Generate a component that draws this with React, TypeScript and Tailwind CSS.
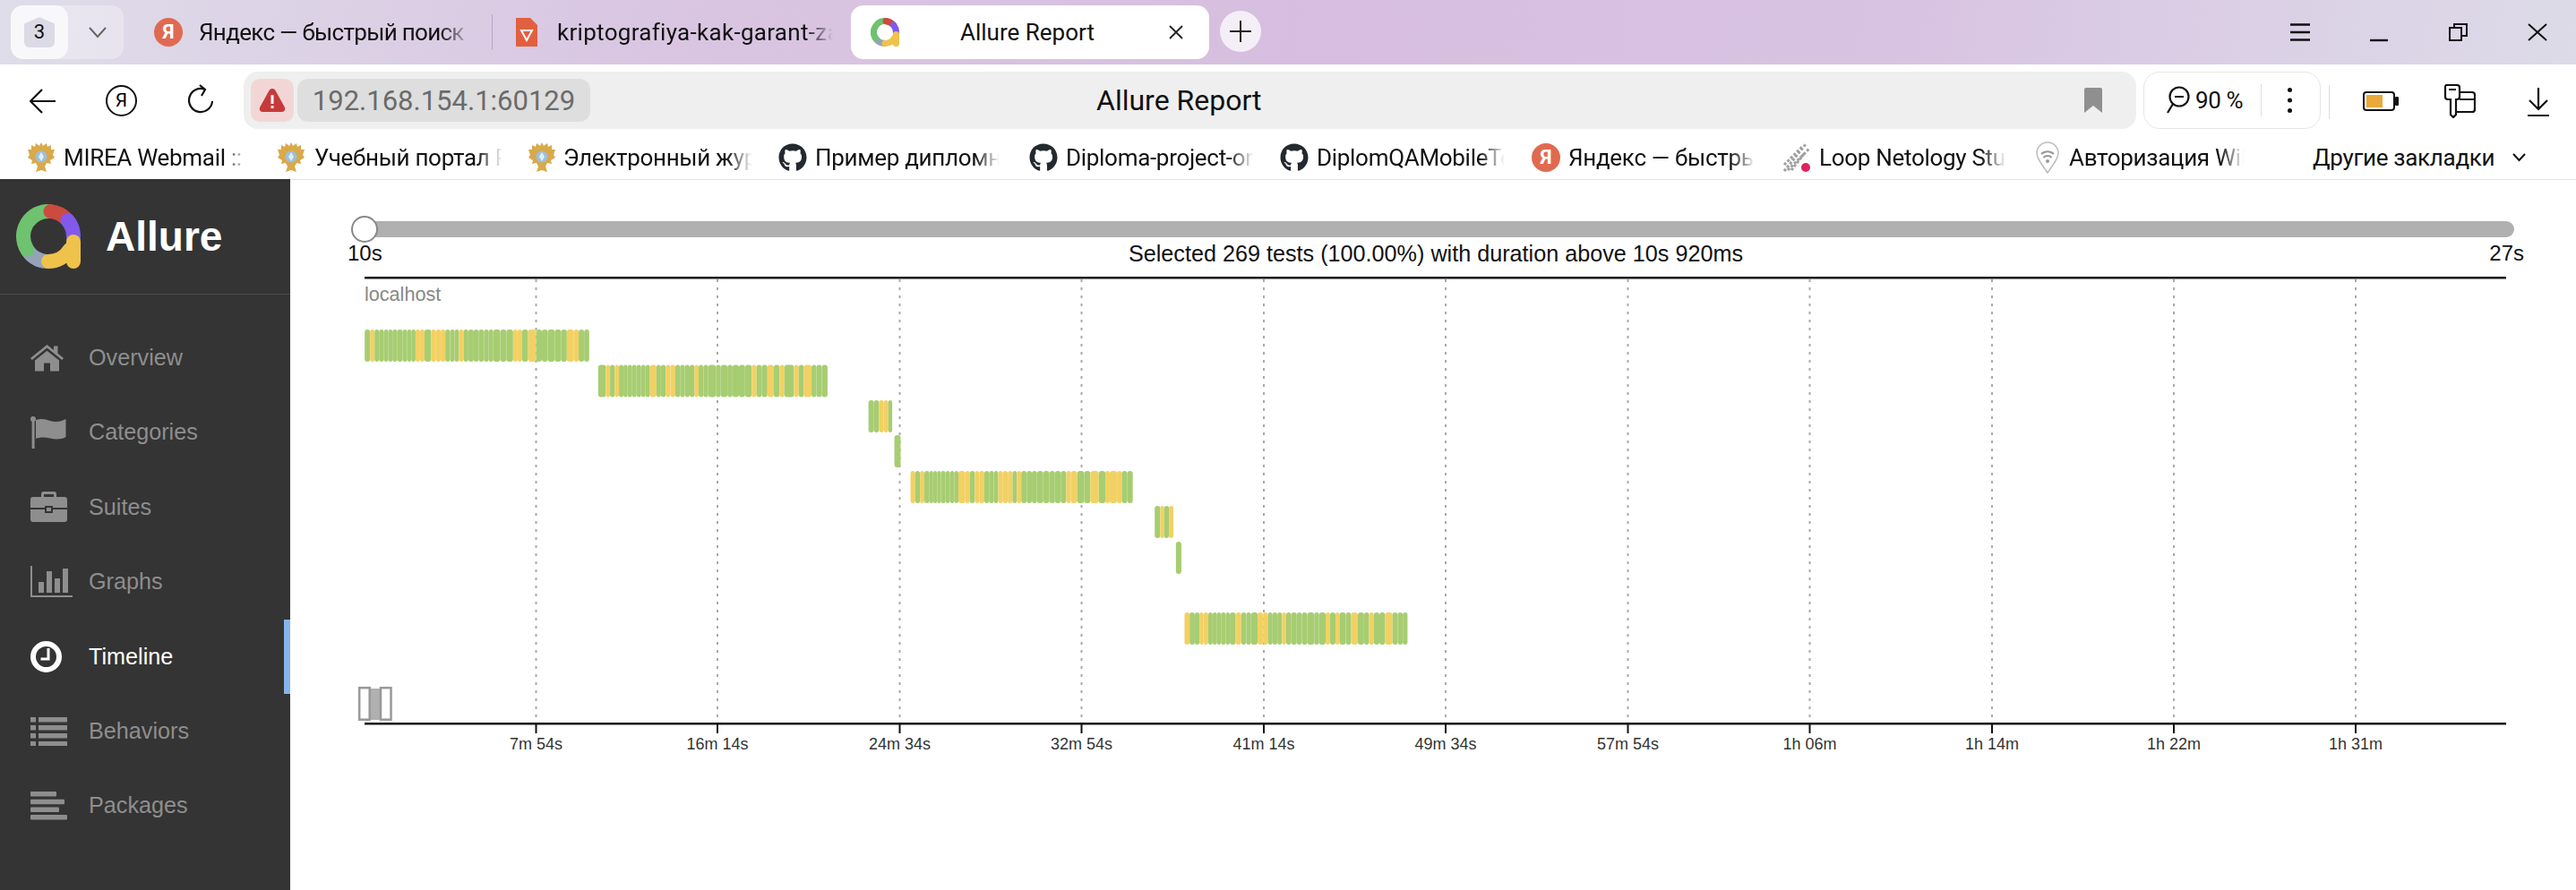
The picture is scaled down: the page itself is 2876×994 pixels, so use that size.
import React from "react";
import { FaGithub } from "react-icons/fa";

const G = "#a7cd72";
const Y = "#f2d164";
type Row = { y: number; sx: number; ox: number; start: number; segs: string };
const rows: Row[] = [
  { y: 368, ox: 380, sx: 2.8, start: 76, segs: "g93 y107 g121 g136 g150 g163 g178 g195 g209 g222 g235 y249 y263 g284 y299 y314 y328 g343 g357 g371 y385 g400 g417 g432 g449 g464 g478 g500 g519 g540 y554 y568 g587 y612 g630 g648 g670 g690 g708 y730 y745 g762 g778" },
  { y: 407.5, ox: 380, sx: 2.8, start: 806, segs: "g830 y843 g858 y871 g885 g898 g912 g926 g940 g954 g968 y988 g1002 g1017 y1032 y1047 g1062 g1077 g1092 g1107 y1120 g1135 g1150 g1174 g1189 g1210 g1226 g1246 g1265 g1286 y1301 g1317 g1335 y1355 g1373 y1388 g1418 y1433 g1449 y1473 g1488 g1505 g1523" },
  { y: 447, ox: 930, sx: 2.45, start: 97, segs: "g112 g126 y139 y151 g162" },
  { y: 486, ox: 930, sx: 2.45, start: 168, segs: "g185" },
  { y: 526, ox: 930, sx: 2.45, start: 212, segs: "y225 g238 y250 g264 g274 g285 g295 g308 g320 g332 g343 y362 y374 g388 y400 y414 g427 g440 g452 y465 y478 y491 g503 y515 g530 g544 g558 g575 g592 g607 g623 g638 y651 y668 g687 g704 y727 g745 y757 y777 y790 g805 g820" },
  { y: 565, ox: 930, sx: 2.45, start: 880, segs: "g895 y906 g919 y931" },
  { y: 605, ox: 930, sx: 2.45, start: 938, segs: "g953" },
  { y: 684, ox: 1260, sx: 2.45, start: 153, segs: "y167 g181 g194 y205 y218 g230 g242 g253 g266 g277 g293 y308 g322 g335 g353 y368 y381 g394 g407 g420 y431 g445 g460 g474 g489 g508 g521 g539 y551 g566 y577 g594 g609 y627 g644 g658 y671 g686 g702 y722 g736 g750 g763" },
];
const ticks: [number, string][] = [
  [598.5, "7m 54s"], [801, "16m 14s"], [1004.5, "24m 34s"], [1207.5, "32m 54s"], [1411, "41m 14s"], [1614, "49m 34s"],
  [1817.5, "57m 54s"], [2020.5, "1h 06m"], [2224, "1h 14m"], [2427, "1h 22m"], [2630, "1h 31m"],
];
const OX = 324;
const OY = 301;

function AllureLogo({ size }: { size: number }) {
  const p = (t: number) => {
    const a = (t * Math.PI) / 180;
    return `${(36 + 28 * Math.sin(a)).toFixed(2)} ${(36 - 28 * Math.cos(a)).toFixed(2)}`;
  };
  return (
    <svg width={size} height={size} viewBox="0 0 72 72" fill="none" strokeWidth={16} strokeLinecap="round" className="shrink-0">
      <path d={`M${p(235)} A28 28 0 0 0 ${p(185)}`} stroke="#94a3b8" />
      <path d={`M${p(180)} A28 28 0 0 0 ${p(122)}`} stroke="#efc24c" />
      <path d={`M${p(238)} A28 28 0 0 1 ${p(5)}`} stroke="#6fc26f" />
      <path d={`M${p(5)} A28 28 0 0 1 ${p(48)}`} stroke="#cc4a3f" />
      <path d={`M${p(50)} A28 28 0 0 1 ${p(92)}`} stroke="#8259ea" />
      <path d="M64 42 V64" stroke="#efc24c" />
    </svg>
  );
}

function YandexIcon() {
  return (
    <span className="flex h-[32px] w-[32px] shrink-0 items-center justify-center rounded-full bg-[#e06a50] text-[22px] font-bold leading-none text-white">Я</span>
  );
}

function Eagle() {
  return (
    <svg width="32" height="36" viewBox="0 0 32 36" className="shrink-0">
      <path d="M16 1l2 4 4-3 1 4 4-2 0 5 4 0-2 6 2 3-5 3 1 4-5-1-2 4 2 6-6-2-6 2 2-6-2-4-5 1 1-4-5-3 2-3-2-6 4 0 0-5 4 2 1-4 4 3z" fill="#d9a94a" />
      <circle cx="16" cy="17" r="6.5" fill="#9cc0dc" />
      <path d="M16 12l3 5-3 5-3-5z" fill="#e6eef5" />
    </svg>
  );
}

function Bookmark({ icon, text, w, gap = 9, ml }: { icon: React.ReactNode; text: string; w: number; gap?: number; ml: number }) {
  return (
    <div className="flex shrink-0 items-center" style={{ marginLeft: ml }}>
      {icon}
      <span
        className="overflow-hidden whitespace-nowrap text-[26px] leading-[34px] tracking-[-0.3px] text-[#111] [mask-image:linear-gradient(to_right,black_85%,transparent_98%)]"
        style={{ width: w, marginLeft: gap }}
      >
        {text}
      </span>
    </div>
  );
}

function NavItem({ icon, label, active }: { icon: React.ReactNode; label: string; active?: boolean }) {
  return (
    <div className={`relative flex h-[83.4px] items-center pl-[34px] ${active ? "text-white" : "text-[#8e8e8e]"}`}>
      <span className="flex w-[65px] shrink-0 items-center">{icon}</span>
      <span className="text-[25.2px] leading-none">{label}</span>
      {active && <span className="absolute right-0 top-0 h-full w-[7px] bg-[#86b4ec]" />}
    </div>
  );
}

const Home = () => (
  <svg width="37" height="30" viewBox="0 0 37 30" fill="currentColor">
    <path d="M18.5 0 L26 6 V1.5 H30.5 V9.8 L37 15 L35.2 17 L18.5 3.6 L1.8 17 L0 15 Z" />
    <path d="M5 17.5 L18.5 6.8 L32 17.5 V29.5 H22 V20.5 H15 V29.5 H5 Z" />
  </svg>
);
const Flag = () => (
  <svg width="40" height="36" viewBox="0 0 40 36" fill="currentColor">
    <circle cx="3" cy="3" r="3" />
    <rect x="1.6" y="3" width="3" height="33" />
    <path d="M6 4 C12 2 16 3 22 5 C28 7 34 6 39.5 3 V23 C34 26 28 26 22 24.5 C16 23 11 23 6 25 Z" />
  </svg>
);
const Brief = () => (
  <svg width="41" height="34" viewBox="0 0 41 34" fill="currentColor">
    <path d="M12 6 V2.5 A2.5 2.5 0 0 1 14.5 0 H26.5 A2.5 2.5 0 0 1 29 2.5 V6 H26 V3 H15 V6 Z" />
    <path d="M3 6 H38 A3 3 0 0 1 41 9 V18 H25 V16 H16 V18 H0 V9 A3 3 0 0 1 3 6 Z" />
    <path d="M0 20 H16 V24 H25 V20 H41 V31 A3 3 0 0 1 38 34 H3 A3 3 0 0 1 0 31 Z" />
    <rect x="18" y="18" width="5" height="4" />
  </svg>
);
const Chart = () => (
  <svg width="47" height="35" viewBox="0 0 47 35" fill="currentColor">
    <rect x="0" y="0" width="2" height="35" />
    <rect x="0" y="33" width="47" height="2" />
    <rect x="9" y="18" width="6" height="12" />
    <rect x="18" y="6" width="6" height="24" />
    <rect x="27" y="14" width="6" height="16" />
    <rect x="36" y="3" width="6" height="27" />
  </svg>
);
const Clock = () => (
  <svg width="35" height="35" viewBox="0 0 35 35" fill="none" stroke="currentColor">
    <circle cx="17.5" cy="17.5" r="14.5" strokeWidth="6" />
    <path d="M20 8 V20 H11.5" strokeWidth="3" />
  </svg>
);
const ListI = () => (
  <svg width="41" height="32" viewBox="0 0 41 32" fill="currentColor">
    {[0, 9, 18, 27].map((y) => (
      <g key={y}>
        <rect x="0" y={y} width="6" height="5.5" />
        <rect x="9" y={y} width="32" height="5.5" />
      </g>
    ))}
  </svg>
);
const Pack = () => (
  <svg width="41" height="32" viewBox="0 0 41 32" fill="currentColor">
    <rect y="0" width="29" height="5.5" rx="1" />
    <rect y="8.7" width="38" height="5.5" rx="1" />
    <rect y="17.4" width="32" height="5.5" rx="1" />
    <rect y="26" width="41" height="5.5" rx="1" />
  </svg>
);

function Chartboard() {
  return (
    <svg width="2552" height="693" viewBox={`${OX} ${OY} 2552 693`} className="block" fontFamily="'Liberation Sans', Arial, sans-serif">
      {ticks.map(([x]) => (
        <line key={x} x1={x} x2={x} y1={312} y2={808} stroke="#aaaaaa" strokeWidth={2} strokeDasharray="3 6" />
      ))}
      <rect x={407} y={309} width={2391} height={2.5} fill="#111" />
      <text x={407} y={336} fontSize={21.6} fill="#888">localhost</text>
      {rows.map((r) => {
        let cur = r.start;
        return (
          <g key={r.y}>
            {r.segs.split(" ").map((s, i) => {
              const end = Number(s.slice(1));
              const x0 = r.ox + cur / r.sx;
              const x1 = r.ox + end / r.sx;
              cur = end;
              return <rect key={i} x={x0} y={r.y} width={x1 - x0} height={36} rx={3} fill={s[0] === "g" ? G : Y} />;
            })}
          </g>
        );
      })}
      <rect x={413} y={769} width={11} height={35} fill="#b0b0b0" />
      <rect x={401.2} y={768.2} width={11.5} height={35.5} fill="#fff" stroke="#999" strokeWidth={2.5} />
      <rect x={425} y={768.2} width={11.5} height={35.5} fill="#fff" stroke="#999" strokeWidth={2.5} />
      <rect x={407} y={807} width={2391} height={2.5} fill="#111" />
      {ticks.map(([x, t]) => (
        <g key={t}>
          <rect x={x - 1} y={808} width={2} height={11} fill="#111" />
          <text x={x} y={837} fontSize={18} fill="#333" textAnchor="middle">{t}</text>
        </g>
      ))}
    </svg>
  );
}

export default function App() {
  const ui = { fontFamily: "Roboto, 'Noto Sans', sans-serif" };
  return (
    <div className="flex h-[994px] w-[2876px] flex-col overflow-hidden bg-white" style={ui}>
      {/* tab strip */}
      <div className="flex h-[72px] shrink-0 items-center bg-[linear-gradient(100deg,#dfdde9_0%,#d9c6e2_25%,#d7bee0_50%,#d8c2e2_72%,#dddbe8_100%)] py-[6px] text-[#111]">
        <div className="ml-[12px] flex h-[60px] w-[126px] shrink-0 rounded-[14px] bg-white/30">
          <div className="flex h-full w-[64px] items-center justify-center rounded-[14px] bg-white/70">
            <div className="flex h-[34px] w-[34px] items-center justify-center rounded-b-[6px] bg-[#dcdae6] text-[22px] leading-none [clip-path:polygon(50%_0,100%_22%,100%_100%,0_100%,0_22%)]">3</div>
          </div>
          <svg width="24" height="24" viewBox="0 0 24 24" fill="none" stroke="#666" strokeWidth="2" className="ml-[21px] self-center"><path d="M3 7l9 10 9-10" /></svg>
        </div>
        <span className="ml-[34px]"><YandexIcon /></span>
        <span className="ml-[18px] w-[305px] shrink-0 overflow-hidden whitespace-nowrap text-[26px] leading-[34px] tracking-[-0.7px] [mask-image:linear-gradient(to_right,black_88%,transparent)]">Яндекс — быстрый поиск</span>
        <span className="ml-[22px] h-[40px] w-[1px] shrink-0 bg-[#b9a8c4]" />
        <svg width="24" height="32" viewBox="0 0 24 32" className="ml-[26px] shrink-0">
          <path d="M0 0H16L24 8V32H0Z" fill="#e2603f" />
          <path d="M6 14H18L12 25Z" fill="none" stroke="#fff" strokeWidth="2" />
        </svg>
        <span className="ml-[22px] w-[308px] shrink-0 overflow-hidden whitespace-nowrap text-[26px] leading-[34px] tracking-[0.3px] [mask-image:linear-gradient(to_right,black_90%,transparent)]">kriptografiya-kak-garant-zashchity</span>
        <div className="ml-[20px] flex h-[60px] w-[400px] shrink-0 items-center rounded-[14px] bg-white pl-[22px]">
          <AllureLogo size={32} />
          <span className="ml-[68px] whitespace-nowrap text-[26px] leading-[34px]">Allure Report</span>
          <svg width="16" height="16" viewBox="0 0 16 16" stroke="#222" strokeWidth="1.8" className="ml-[83px]"><path d="M1 1l14 14M15 1L1 15" /></svg>
        </div>
        <div className="ml-[12px] flex h-[46px] w-[46px] shrink-0 -translate-y-[1px] items-center justify-center rounded-full bg-[#f4eff7]">
          <svg width="24" height="24" viewBox="0 0 24 24" stroke="#222" strokeWidth="2"><path d="M12 0v24M0 12h24" /></svg>
        </div>
        <div className="ml-auto mr-[32px] flex items-center">
          <svg width="22" height="20" viewBox="0 0 22 20" stroke="#111" strokeWidth="2.4"><path d="M0 1.5h22M0 10h22M0 18.5h22" /></svg>
          <svg width="20" height="22" viewBox="0 0 20 22" stroke="#111" strokeWidth="2.4" className="ml-[67px]"><path d="M0 20h20" /></svg>
          <svg width="22" height="20" viewBox="0 0 22 20" stroke="#111" strokeWidth="2" fill="none" className="ml-[68px]"><rect x="1" y="5" width="13" height="14" /><path d="M6 5V1h14v13h-6" /></svg>
          <svg width="22" height="20" viewBox="0 0 22 20" stroke="#111" strokeWidth="2" className="ml-[66px]"><path d="M1 1l20 18M21 1L1 19" /></svg>
        </div>
      </div>
      <div className="flex h-[72px] shrink-0 items-start rounded-t-[14px] bg-white">
        <svg width="29" height="28" viewBox="0 0 29 28" fill="none" stroke="#111" strokeWidth="2.2" className="ml-[33px] mt-[27px] shrink-0"><path d="M14 1L1 14l13 13M1 14h28" /></svg>
        <div className="ml-[56px] mt-[23px] flex h-[35px] w-[35px] shrink-0 items-center justify-center rounded-full border-2 border-[#111] text-[21px] leading-none">Я</div>
        <svg width="28" height="34" viewBox="0 0 28 34" fill="none" stroke="#111" strokeWidth="2.2" className="ml-[57px] mt-[22px] shrink-0"><path d="M19 6A13 13 0 1 0 27 19M13 1l6 5-4 7" /></svg>
        <div className="ml-[34px] mt-[8px] flex h-[64px] w-[2113px] shrink-0 items-center rounded-[16px] bg-[#efefef] pl-[8px]">
          <div className="flex h-[48px] w-[48px] shrink-0 items-center justify-center rounded-[10px] bg-[#f2d6d6]">
            <svg width="30" height="28" viewBox="0 0 30 28"><path d="M15 1C17 1 18 2 19 4L29 22C30 25 28 27 25 27H5C2 27 0 25 1 22L11 4C12 2 13 1 15 1Z" fill="#c73a3a" /><rect x="13.5" y="8" width="3" height="10" fill="#fff" /><rect x="13.5" y="20" width="3" height="3" fill="#fff" /></svg>
          </div>
          <div className="ml-[4px] flex h-[48px] w-[327px] shrink-0 items-center justify-center rounded-[12px] bg-[#dedede] text-[31px] leading-none text-[#6b6b6b]">192.168.154.1:60129</div>
          <span className="ml-[565px] whitespace-nowrap text-[32px] leading-none text-[#111]">Allure Report</span>
          <svg width="20" height="28" viewBox="0 0 20 28" className="ml-auto mr-[38px]"><path d="M2 0H18A2 2 0 0 1 20 2V28L10 20L0 28V2A2 2 0 0 1 2 0Z" fill="#8f8f8f" /></svg>
        </div>
        <div className="ml-[8px] mt-[8px] flex h-[64px] w-[198px] shrink-0 items-center rounded-[18px] border border-[#e6e6e6] pl-[25px]">
          <svg width="26" height="32" viewBox="0 0 26 32" fill="none" stroke="#111" strokeWidth="2.2"><circle cx="14" cy="12" r="10.5" /><path d="M9 12h10M7 20L1 30" /></svg>
          <span className="ml-[6px] whitespace-nowrap text-[26px] leading-none tracking-[-0.4px] text-[#111]">90 %</span>
          <span className="ml-[20px] h-[36px] w-[1px] bg-[#dedede]" />
          <svg width="5" height="28" viewBox="0 0 5 28" fill="#111" className="ml-[29px]"><circle cx="2.5" cy="2.5" r="2.5" /><circle cx="2.5" cy="14" r="2.5" /><circle cx="2.5" cy="25.5" r="2.5" /></svg>
        </div>
        <span className="ml-[9px] mt-[23px] h-[38px] w-[1px] shrink-0 bg-[#dedede]" />
        <svg width="40" height="22" viewBox="0 0 40 22" className="ml-[37px] mt-[30px] shrink-0"><rect x="1" y="1" width="34" height="20" rx="3" fill="none" stroke="#111" strokeWidth="2" /><rect x="4" y="4" width="18" height="14" fill="#eaa93a" /><rect x="36" y="6" width="4" height="10" rx="1" fill="#111" /></svg>
        <svg width="37" height="38" viewBox="0 0 37 38" fill="none" stroke="#111" strokeWidth="2.2" className="ml-[49px] mt-[22px] shrink-0"><path d="M4 1h12a3 3 0 0 1 3 3v10a3 3 0 0 1-3 3h-1v17l-3 3-3-3V17H6a3 3 0 0 1-3-3V4a3 3 0 0 1 1-3zM7 6h8M19 9h14a3 3 0 0 1 3 3v16a3 3 0 0 1-3 3H15M19 17h17" /></svg>
        <svg width="24" height="32" viewBox="0 0 24 32" fill="none" stroke="#111" strokeWidth="2.2" className="ml-[58px] mt-[26px] shrink-0"><path d="M12 0v24M2 14l10 10 10-10M0 31h24" /></svg>
      </div>
      {/* bookmarks */}
      <div className="flex h-[56px] shrink-0 items-center bg-white pt-[8px]">
        <Bookmark ml={30} icon={<Eagle />} text="MIREA Webmail :: Добро пожаловать" w={210} />
        <Bookmark ml={28} icon={<Eagle />} text="Учебный портал РТУ МИРЭА" w={214} gap={10} />
        <Bookmark ml={24} icon={<Eagle />} text="Электронный журнал" w={215} gap={8} />
        <Bookmark ml={25} icon={<FaGithub size={32} color="#24292f" className="shrink-0" />} text="Пример дипломной работы" w={210} />
        <Bookmark ml={29} icon={<FaGithub size={32} color="#24292f" className="shrink-0" />} text="Diploma-project-on-QA" w={214} />
        <Bookmark ml={25} icon={<FaGithub size={32} color="#24292f" className="shrink-0" />} text="DiplomQAMobileTests" w={214} />
        <Bookmark ml={26} icon={<YandexIcon />} text="Яндекс — быстрый поиск" w={213} />
        <Bookmark ml={26} icon={
          <svg width="33" height="32" viewBox="0 0 33 32" className="shrink-0"><path d="M2 31L26 1M6 30L30 6M2 24L22 4M10 30L24 12" stroke="#a0a0a0" strokeWidth="3" strokeDasharray="3 2" /><circle cx="26" cy="27" r="5" fill="#e0245e" /></svg>
        } text="Loop Netology Students" w={213} gap={8} />
        <Bookmark ml={29} icon={
          <svg width="26" height="36" viewBox="0 0 26 36" fill="none" className="shrink-0"><path d="M13 35C8 27 1 20 1 13a12 12 0 0 1 24 0C25 20 18 27 13 35Z" stroke="#bbb" strokeWidth="1.5" /><path d="M6 14a10 10 0 0 1 14 0M8.5 18a6 6 0 0 1 9 0" stroke="#999" strokeWidth="2" /><circle cx="13" cy="22" r="2" fill="#999" /></svg>
        } text="Авторизация WiFi" w={199} gap={11} />
        <span className="ml-[73px] whitespace-nowrap text-[26px] leading-[34px] tracking-[-0.3px] text-[#111]">Другие закладки</span>
        <svg width="15" height="10" viewBox="0 0 15 10" fill="none" stroke="#111" strokeWidth="2" className="ml-[20px] shrink-0"><path d="M1 1l6.5 7L14 1" /></svg>
      </div>
      {/* page */}
      <div className="flex min-h-0 flex-1" style={{ fontFamily: "'Liberation Sans', Arial, sans-serif" }}>
        <aside className="flex w-[324px] shrink-0 flex-col bg-[#343434]">
          <div className="flex h-[129px] shrink-0 items-center border-b border-[#4b4b4b] pl-[18px]">
            <AllureLogo size={72} />
            <span className="ml-[28px] text-[46px] font-bold leading-none text-white">Allure</span>
          </div>
          <nav className="pt-[29px]">
            <NavItem icon={<Home />} label="Overview" />
            <NavItem icon={<Flag />} label="Categories" />
            <NavItem icon={<Brief />} label="Suites" />
            <NavItem icon={<Chart />} label="Graphs" />
            <NavItem icon={<Clock />} label="Timeline" active />
            <NavItem icon={<ListI />} label="Behaviors" />
            <NavItem icon={<Pack />} label="Packages" />
          </nav>
        </aside>
        <main className="min-w-0 flex-1 border-t border-[#e3e3e3]">
          <div className="relative ml-[81px] mt-[46px] h-[18px] w-[2402px] rounded-r-full bg-[#b0b0b0]">
            <span className="absolute left-[-13px] top-[-6px] h-[30px] w-[30px] rounded-full border-2 border-[#888] bg-white" />
          </div>
          <div className="ml-[64px] flex h-[36px] w-[2430px] items-center justify-between text-[24px] leading-none text-[#111]">
            <span>10s</span>
            <span className="translate-y-[1px] text-[25.2px]">Selected 269 tests (100.00%) with duration above 10s 920ms</span>
            <span>27s</span>
          </div>
          <Chartboard />
        </main>
      </div>
    </div>
  );
}
